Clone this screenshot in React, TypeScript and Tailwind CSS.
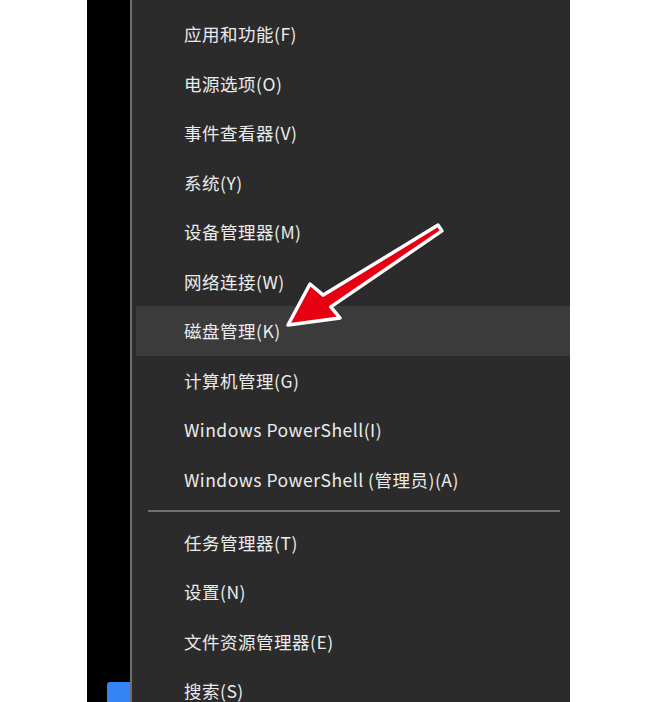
const topItems = [
  "应用和功能(F)",
  "电源选项(O)",
  "事件查看器(V)",
  "系统(Y)",
  "设备管理器(M)",
  "网络连接(W)",
  "磁盘管理(K)",
  "计算机管理(G)",
  "Windows PowerShell(I)",
  "Windows PowerShell (管理员)(A)",
];

const bottomItems = ["任务管理器(T)", "设置(N)", "文件资源管理器(E)", "搜索(S)"];

function Row({ label, active }: { label: string; active?: boolean }) {
  return (
    <div
      className={
        "h-[49.5px] flex items-center pl-[48px] text-[17.5px] leading-none tracking-[0.5px] text-[#ebebeb] " +
        (active ? "bg-[#3b3b3b]" : "")
      }
    >
      {label}
    </div>
  );
}

export default function App() {
  return (
    <div
      className="relative w-[670px] h-[702px] bg-white overflow-hidden flex"
      style={{ fontFamily: '"Noto Sans CJK SC", "Noto Sans", sans-serif' }}
    >
      <div className="w-[87px] shrink-0" />
      <div className="w-[43px] shrink-0 bg-black flex flex-col justify-end">
        <div className="ml-[20px] h-[20px] bg-[#3583f5] rounded-tl-[3px]" />
      </div>
      <div className="w-[2px] shrink-0 bg-[#6e6e6e]" />
      <div className="w-[438px] shrink-0 bg-[#2b2b2b] pt-[9px] pl-[4px]">
        {topItems.map((t) => (
          <Row key={t} label={t} active={t === "磁盘管理(K)"} />
        ))}
        <div className="h-[13.5px] flex items-center pl-[12px] pr-[10px]">
          <div className="h-[1.5px] w-full bg-[#707070]" />
        </div>
        {bottomItems.map((t) => (
          <Row key={t} label={t} />
        ))}
      </div>

      {/* annotation arrow */}
      <svg className="absolute left-0 top-0" width="670" height="702" viewBox="0 0 670 702">
        <polygon
          points="288,325 310,284 323.2,295.1 438.1,225.1 441.9,230.9 330.8,306.9 340,318"
          fill="#e60012"
          stroke="#ffffff"
          strokeWidth="3.5"
          strokeLinejoin="round"
        />
      </svg>
    </div>
  );
}
